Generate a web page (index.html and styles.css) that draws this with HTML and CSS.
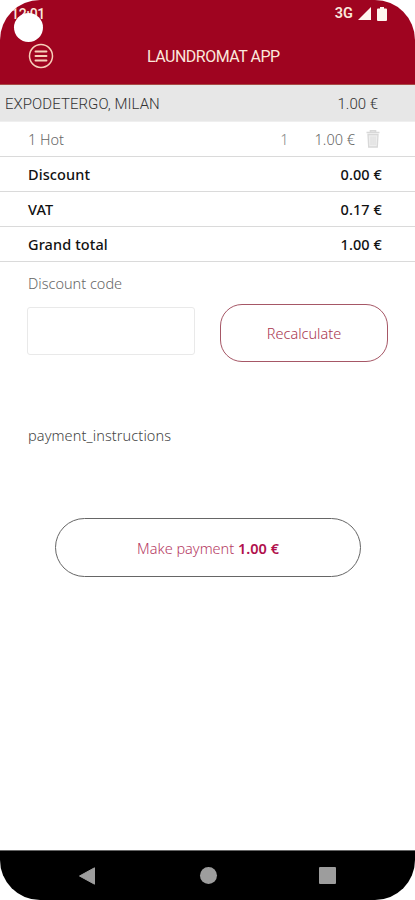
FILE: index.html
```html
<!DOCTYPE html>
<html lang="en">
<head>
<meta charset="utf-8">
<title>Laundromat App</title>
<link rel="stylesheet" href="styles.css">
</head>
<body>
<div class="phone">
  <header class="top">
    <div class="status">
      <span class="clock">12:01</span>
      <span class="network">3G</span>
      <svg class="signal" width="13" height="13" viewBox="0 0 13 13"><path d="M13 0V13H0Z" fill="#fff5ee"/></svg>
      <svg class="battery" width="10" height="14" viewBox="0 0 10 14"><path d="M3 0h4v1.6h2q1 0 1 1V13q0 1-1 1H1q-1 0-1-1V2.600q0-1 1-1h2Z" fill="#fff5ee"/></svg>
    </div>
    <div class="camera"></div>
    <div class="titlebar">
      <svg class="menu" width="26" height="26" viewBox="0 0 26 26" fill="none" stroke="#f7cfb9"><circle cx="13" cy="13" r="11.500" stroke-width="1.500"/><path d="M7.500 8.500h11M7.500 13h11M7.500 17.500h11" stroke-width="1.900" stroke-linecap="round"/></svg>
      <h1 class="title">LAUNDROMAT APP</h1>
    </div>
  </header>
  <main class="content">
    <div class="row venue"><span class="venue-name">EXPODETERGO, MILAN</span><span class="venue-price">1.00 €</span></div>
    <div class="row item">
      <span class="hot">1 Hot</span><span class="qty">1</span><span class="price">1.00 €</span>
      <svg class="trash" width="14" height="18" viewBox="0 0 14 18" fill="none" stroke="#d8d8d8"><path d="M0.500 2.500h13M4.500 2V0.800h5V2" stroke-width="1.600"/><path d="M2 4.500h10L11.300 17H2.700Z" fill="#eee" stroke-width="1.300"/><path d="M5 6.500v8.500M7 6.500v8.500M9 6.500v8.500" stroke-width=".8"/></svg>
    </div>
    <div class="row total"><span class="discount">Discount</span><span>0.00 €</span></div>
    <div class="row total"><span class="vat">VAT</span><span>0.17 €</span></div>
    <div class="row total"><span class="grand">Grand total</span><span>1.00 €</span></div>
    <label class="code-label" for="code">Discount code</label>
    <div class="code-form"><input class="code" id="code" type="text"><button class="recalc">Recalculate</button></div>
    <p class="instructions">payment_instructions</p>
    <button class="pay"><span>Make payment</span> <b>1.00 €</b></button>
  </main>
  <nav class="navbar">
    <svg class="back" width="16" height="18" viewBox="0 0 16 18"><path d="M15.500 .8V17.200L.5 9Z" fill="#9d9d9d" stroke="#9d9d9d" stroke-linejoin="round"/></svg>
    <span class="home"></span>
    <span class="recent"></span>
  </nav>
</div>
</body>
</html>
```
FILE: styles.css
```css
* { box-sizing: border-box; }
body { margin: 0; background: #fff; font-family: "Noto Sans", sans-serif; font-size: 14.500px; font-weight: 300; color: #666; }
.phone { position: relative; width: 415px; height: 900px; display: flex; flex-direction: column; overflow: hidden; border-radius: 40px; background: #fff; }
.top { height: 85px; background: #9f0420; font-family: Roboto, sans-serif; color: #fbe8dc; border-bottom: 1px solid #a84a45; }
.status { display: flex; align-items: center; height: 27px; padding: 0 28px 0 11px; }
.clock { font-size: 14px; font-weight: 500; margin-right: auto; letter-spacing: -.3px; }
.network { font-size: 14.500px; font-weight: 600; margin-right: 5px; }
.signal { margin-right: 6px; }
.camera { position: absolute; left: 14px; top: 13px; width: 29px; height: 29px; border-radius: 50%; background: #fff; }
.titlebar { display: flex; align-items: center; height: 58px; padding-left: 28px; }
.menu { margin-right: 93px; }
.title { margin: 0; font-size: 16px; font-weight: 400; white-space: nowrap; letter-spacing: -.5px; }
.content { flex: 1; display: flex; flex-direction: column; }
.row { display: flex; align-items: center; height: 35px; border-bottom: 1px solid #dadada; padding: 0 33px 0 28px; white-space: nowrap; }
.venue { height: 37px; background: #e7e7e7; border-color: #efefef; padding: 2px 37px 0 5px; justify-content: space-between; color: #333; font-family: Roboto, sans-serif; font-size: 15px; }
.venue-name { letter-spacing: .05px; }
.item { padding-right: 35px; }
.qty { margin-left: auto; margin-right: 26px; color: #888; }
.trash { margin-left: 11px; }
.total { justify-content: space-between; color: #111; font-weight: 500; letter-spacing: .1px; }
.code-label { height: 20px; line-height: 20px; margin: 11px 0 0 28px; }
.code-form { display: flex; align-items: center; height: 58px; margin: 11px 0 0 27px; gap: 25px; }
.code { width: 168px; height: 48px; margin-bottom: 4px; border: 1px solid #e9e9e9; border-radius: 3px; background: #fff; outline: none; }
.recalc { width: 168px; height: 58px; padding: 0; border: 1px solid #a65766; border-radius: 22px; background: #fff; font: inherit; color: #a93550; }
.instructions { margin: 63px 0 0 28px; height: 20px; line-height: 20px; color: #444; letter-spacing: .1px; }
.pay { width: 306px; height: 59px; margin: 73px 0 0 55px; padding: 0; border: 1px solid #666; border-radius: 30px; background: #fff; font: inherit; color: #b53a63; }
.pay b { color: #b0104c; font-weight: 600; }
.navbar { display: flex; align-items: center; height: 50px; background: #000; border-top: 1px solid #666; padding-left: 79px; }
.back { margin-right: 104.500px; }
.home { width: 17px; height: 17px; border-radius: 50%; background: #9d9d9d; margin-right: 102px; }
.recent { width: 17px; height: 17px; border-radius: 1px; background: #9d9d9d; }
```
